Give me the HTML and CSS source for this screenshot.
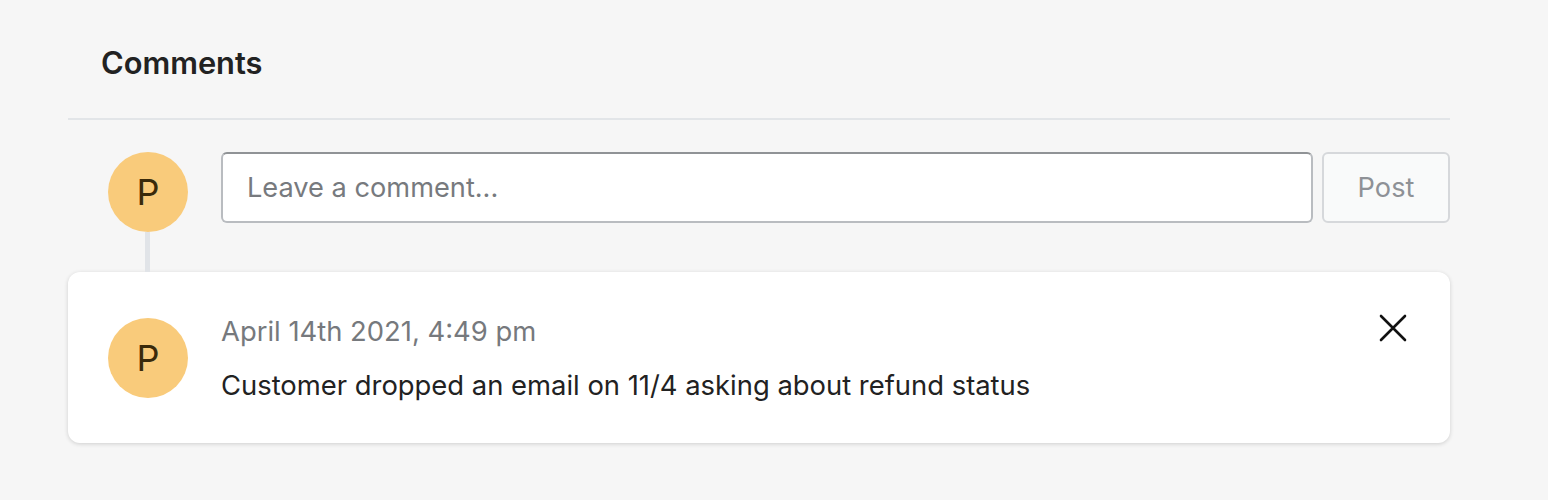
FILE: index.html
```html
<!DOCTYPE html>
<html>
<head>
<meta charset="utf-8">
<link rel="stylesheet" href="styles.css">
</head>
<body>
<div class="wrap">
  <div class="header"><h2 class="title">Comments</h2></div>
  <div class="compose">
    <div class="avatar-col">
      <div class="avatar">P</div>
      <div class="line"></div>
    </div>
    <div class="input-box">Leave a comment...</div>
    <button class="post">Post</button>
  </div>
  <div class="card">
    <div class="avatar">P</div>
    <div class="body">
      <div class="date">April 14th 2021, 4:49 pm</div>
      <div class="text">Customer dropped an email on 11/4 asking about refund status</div>
    </div>
    <button class="close" aria-label="Delete">
      <svg width="30" height="30" viewBox="0 0 30 30"><path d="M3 3 L27 27 M27 3 L3 27" stroke="#111" stroke-width="2.6" stroke-linecap="round" fill="none"/></svg>
    </button>
  </div>
</div>
</body>
</html>
```
FILE: styles.css
```css
html, body { margin: 0; padding: 0; }
body {
  background: #f6f6f6;
  font-family: Inter, "Noto Sans", sans-serif;
  color: #222;
  width: 1548px;
  height: 500px;
  overflow: hidden;
}
.wrap {
  margin-left: 68px;
  width: 1382px;
}
.header {
  padding: 44px 0 0 33px;
  border-bottom: 2px solid #e2e5e8;
  box-sizing: border-box;
  height: 120px;
}
.title {
  margin: 0;
  font-size: 30.8px;
  font-weight: 600;
  line-height: 38px;
  color: #222;
}
.compose {
  display: flex;
  align-items: flex-start;
  padding-top: 32px;
}
.avatar-col {
  width: 120px;
  padding-left: 40px;
  box-sizing: border-box;
  display: flex;
  flex-direction: column;
  flex: none;
}
.avatar {
  width: 80px;
  height: 80px;
  border-radius: 50%;
  background: #f9cb7b;
  color: #3a2a0a;
  font-size: 36px;
  font-weight: 400;
  display: flex;
  align-items: center;
  justify-content: center;
  flex: none;
}
.line {
  width: 5px;
  height: 40px;
  background: #e1e4e8;
  margin-left: 37px;
}
.input-box {
  margin-left: 33px;
  flex: 1;
  height: 71px;
  box-sizing: border-box;
  background: #fff;
  border: 2px solid #b9bcc0;
  border-top-color: #909396;
  border-radius: 6px;
  padding-left: 24px;
  display: flex;
  align-items: center;
  font-size: 27.2px;
  color: #777a7e;
}
.post {
  margin-left: 9px;
  width: 128px;
  height: 71px;
  box-sizing: border-box;
  background: #f9fafa;
  border: 2px solid #d6d8db;
  border-radius: 6px;
  font-family: inherit;
  font-size: 27.2px;
  color: #8e9196;
  padding: 0;
}
.card {
  background: #fff;
  border-radius: 12px;
  box-shadow: 0 1px 4px rgba(0,0,0,0.16);
  display: flex;
  align-items: flex-start;
  padding: 46px 42px 45px 40px;
  height: 171px;
  box-sizing: border-box;
}
.body {
  margin-left: 33px;
  margin-top: -2px;
  flex: 1;
}
.date {
  font-size: 27.4px;
  color: #76797d;
  line-height: 30px;
}
.text {
  margin-top: 24px;
  font-size: 27.4px;
  line-height: 30px;
  color: #222;
}
.close {
  background: none;
  border: 0;
  padding: 0;
  margin-top: -5px;
  width: 30px;
  height: 30px;
}
.close svg { display: block; }
```
